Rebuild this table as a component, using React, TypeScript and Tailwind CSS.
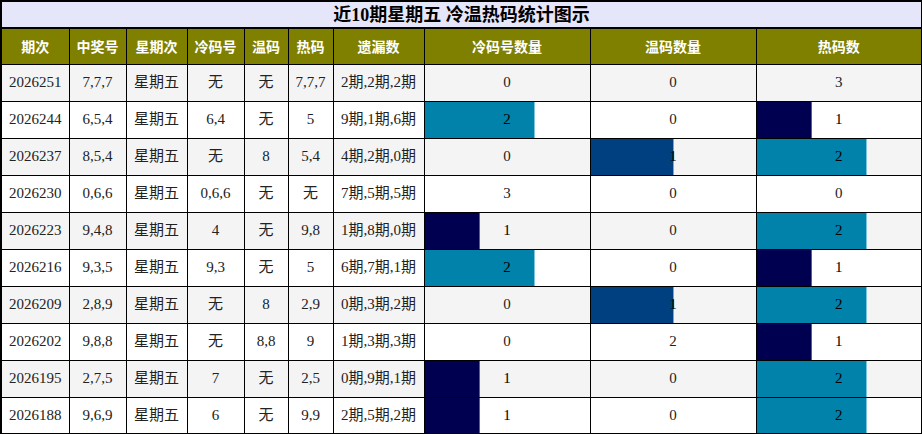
import React from "react";

type Bar = { w: number; color: string; edge: string } | null;

const NAVY = { color: "bg-[#000050]", edge: "border-[#5a5a9a]" };
const TEAL = { color: "bg-[#0082aa]", edge: "border-[#7cc4dc]" };
const MID = { color: "bg-[#004080]", edge: "border-[#7aa6d0]" };

interface Row {
  qi: string;
  num: string;
  cold: string;
  warm: string;
  hot: string;
  miss: string;
  c: number;
  w: number;
  h: number;
}

const rows: Row[] = [
  { qi: "2026251", num: "7,7,7", cold: "无", warm: "无", hot: "7,7,7", miss: "2期,2期,2期", c: 0, w: 0, h: 3 },
  { qi: "2026244", num: "6,5,4", cold: "6,4", warm: "无", hot: "5", miss: "9期,1期,6期", c: 2, w: 0, h: 1 },
  { qi: "2026237", num: "8,5,4", cold: "无", warm: "8", hot: "5,4", miss: "4期,2期,0期", c: 0, w: 1, h: 2 },
  { qi: "2026230", num: "0,6,6", cold: "0,6,6", warm: "无", hot: "无", miss: "7期,5期,5期", c: 3, w: 0, h: 0 },
  { qi: "2026223", num: "9,4,8", cold: "4", warm: "无", hot: "9,8", miss: "1期,8期,0期", c: 1, w: 0, h: 2 },
  { qi: "2026216", num: "9,3,5", cold: "9,3", warm: "无", hot: "5", miss: "6期,7期,1期", c: 2, w: 0, h: 1 },
  { qi: "2026209", num: "2,8,9", cold: "无", warm: "8", hot: "2,9", miss: "0期,3期,2期", c: 0, w: 1, h: 2 },
  { qi: "2026202", num: "9,8,8", cold: "无", warm: "8,8", hot: "9", miss: "1期,3期,3期", c: 0, w: 2, h: 1 },
  { qi: "2026195", num: "2,7,5", cold: "7", warm: "无", hot: "2,5", miss: "0期,9期,1期", c: 1, w: 0, h: 2 },
  { qi: "2026188", num: "9,6,9", cold: "6", warm: "无", hot: "9,9", miss: "2期,5期,2期", c: 1, w: 0, h: 2 },
];

// cold / hot columns: 1 -> navy third, 2 -> teal two thirds
const coldHotBar = (v: number): Bar =>
  v === 1 ? { w: 55, ...NAVY } : v === 2 ? { w: 110, ...TEAL } : null;
const warmBar = (v: number): Bar => (v === 1 ? { w: 83, ...MID } : null);

const headers = ["期次", "中奖号", "星期次", "冷码号", "温码", "热码", "遗漏数", "冷码号数量", "温码数量", "热码数"];
const colWidths = ["w-[68px]", "w-[57px]", "w-[61px]", "w-[57px]", "w-[44px]", "w-[45px]", "w-[91px]", "w-[166px]", "w-[166px]", "w-[166px]"];

const BarCell = ({ value, bar }: { value: number; bar: Bar }) => (
  <td className="relative border border-black p-0 text-center">
    {bar && (
      <div
        className={`absolute left-0 top-0 bottom-0 border-r ${bar.color} ${bar.edge}`}
        style={{ width: bar.w }}
      />
    )}
    <span className={`relative ${bar ? "text-black" : ""}`}>{value}</span>
  </td>
);

export default function App() {
  return (
    <div className="w-[922px] bg-white font-['Liberation_Serif','Noto_Sans_CJK_SC',serif]">
      <table className="w-[922px] table-fixed border-collapse border-2 border-black">
        <colgroup>
          {colWidths.map((w, i) => (
            <col key={i} className={w} />
          ))}
        </colgroup>
        <thead>
          <tr className="h-[27px]">
            <th
              colSpan={10}
              className="border-2 border-black bg-[#e6e6fa] p-0 text-center text-[18px] font-bold leading-none text-black"
            >
              近10期星期五 冷温热码统计图示
            </th>
          </tr>
          <tr className="h-[36px] bg-[#808000]">
            {headers.map((t) => (
              <th
                key={t}
                className="border border-black p-0 text-center font-['Noto_Sans_CJK_SC',sans-serif] text-[14px] font-bold text-white"
              >
                {t}
              </th>
            ))}
          </tr>
        </thead>
        <tbody className="text-[15px] text-[#222222]">
          {rows.map((r, i) => (
            <tr key={r.qi} className={`h-[37px] ${i % 2 === 0 ? "bg-[#f4f4f4]" : "bg-white"}`}>
              <td className="border border-black p-0 text-center">{r.qi}</td>
              <td className="border border-black p-0 text-center">{r.num}</td>
              <td className="border border-black p-0 text-center">星期五</td>
              <td className="border border-black p-0 text-center">{r.cold}</td>
              <td className="border border-black p-0 text-center">{r.warm}</td>
              <td className="border border-black p-0 text-center">{r.hot}</td>
              <td className="border border-black p-0 text-center">{r.miss}</td>
              <BarCell value={r.c} bar={coldHotBar(r.c)} />
              <BarCell value={r.w} bar={warmBar(r.w)} />
              <BarCell value={r.h} bar={coldHotBar(r.h)} />
            </tr>
          ))}
        </tbody>
      </table>
    </div>
  );
}
